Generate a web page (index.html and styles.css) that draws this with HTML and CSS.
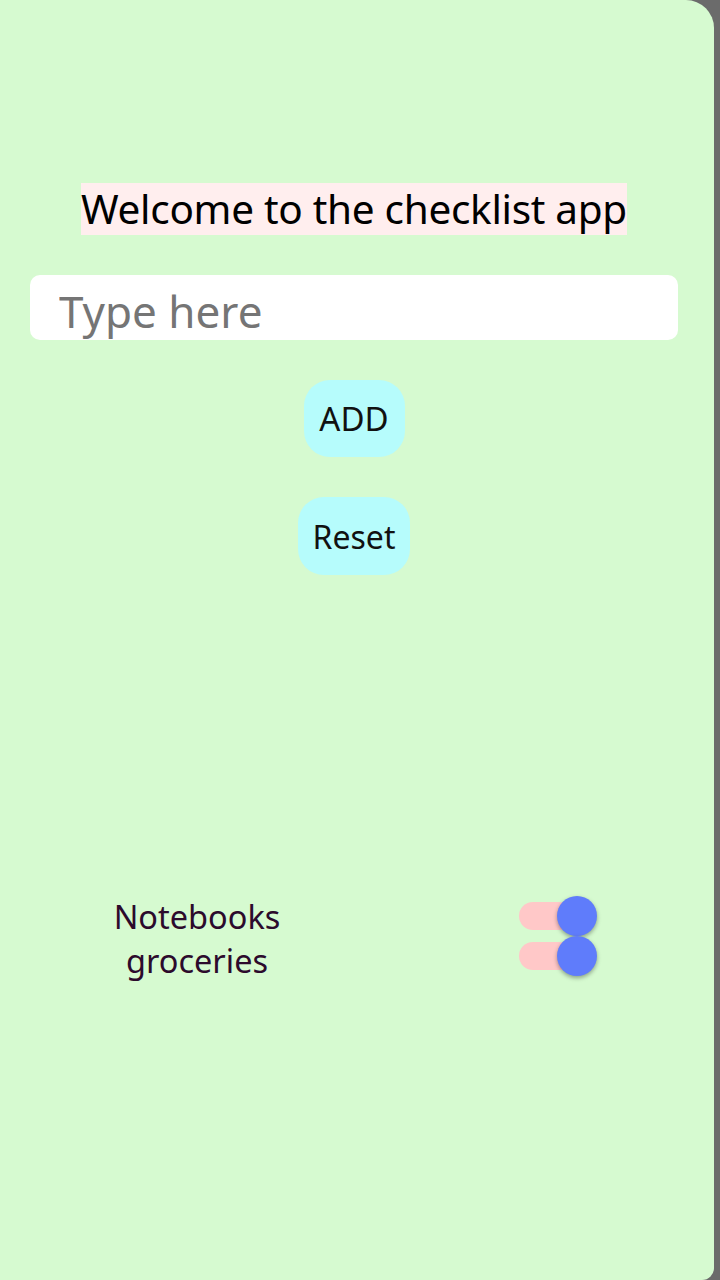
FILE: index.html
```html
<!DOCTYPE html>
<html>
<head>
<meta charset="utf-8">
<link rel="stylesheet" href="styles.css">
</head>
<body>
<div class="card">
  <h1 class="title">Welcome to the checklist app</h1>
  <input class="entry" type="text" placeholder="Type here">
  <button class="btn btn-add">ADD</button>
  <button class="btn btn-reset">Reset</button>
  <div class="list">
    <div class="labels">
      <span class="label">Notebooks</span>
      <span class="label">groceries</span>
    </div>
    <div class="switches">
      <span class="switch"><span class="track"></span><span class="thumb"></span></span>
      <span class="switch"><span class="track"></span><span class="thumb"></span></span>
    </div>
  </div>
</div>
</body>
</html>
```

FILE: styles.css
```css
html, body {
  margin: 0;
  padding: 0;
  background: #6b6b6b;
}
body {
  width: 720px;
  height: 1280px;
  font-family: "Noto Sans", "Open Sans", sans-serif;
}
.card {
  width: 714px;
  height: 1280px;
  background: #d6fad0;
  border-radius: 0 28px 12px 0;
  display: flex;
  flex-direction: column;
  align-items: center;
  box-sizing: border-box;
  padding-top: 183px;
  padding-right: 6px;
}
.title {
  margin: 0;
  font-weight: 400;
  font-size: 40.5px;
  line-height: 52px;
  color: #000;
  background: #ffeeee;
  letter-spacing: -0.3px;
}
.entry {
  margin-top: 40px;
  width: 648px;
  height: 65px;
  box-sizing: border-box;
  border: none;
  outline: none;
  border-radius: 10px;
  background: #fff;
  padding: 6px 0 0 29px;
  font-family: "Noto Sans", "Open Sans", sans-serif;
  font-size: 44px;
  color: #222;
}
.entry::placeholder {
  color: #757575;
}
.btn {
  margin-top: 40px;
  height: 77px;
  border: none;
  border-radius: 26px;
  background: #b6fcfc;
  font-family: "Noto Sans", "Open Sans", sans-serif;
  font-size: 32px;
  color: #111;
  padding: 0;
}
.btn-add {
  width: 101px;
  font-size: 33px;
}
.btn-reset {
  width: 112px;
  height: 78px;
}
.list {
  margin-top: 320px;
  width: 648px;
  display: flex;
  align-items: flex-start;
}
.labels {
  width: 334px;
  display: flex;
  flex-direction: column;
  align-items: center;
}
.label {
  font-size: 32.5px;
  line-height: 44px;
  color: #2c0a2c;
}
.switches {
  margin-left: auto;
  margin-right: 81px;
  padding-top: 1px;
  display: flex;
  flex-direction: column;
}
.switch {
  position: relative;
  width: 78px;
  height: 40px;
}
.track {
  position: absolute;
  left: 0;
  top: 6px;
  width: 54px;
  height: 28px;
  border-radius: 14px;
  background: #ffc8c8;
}
.thumb {
  position: absolute;
  left: 38px;
  top: 0;
  width: 40px;
  height: 40px;
  border-radius: 50%;
  background: #5f7cfb;
  box-shadow: 0 2px 4px rgba(0, 0, 0, 0.35);
}
```
